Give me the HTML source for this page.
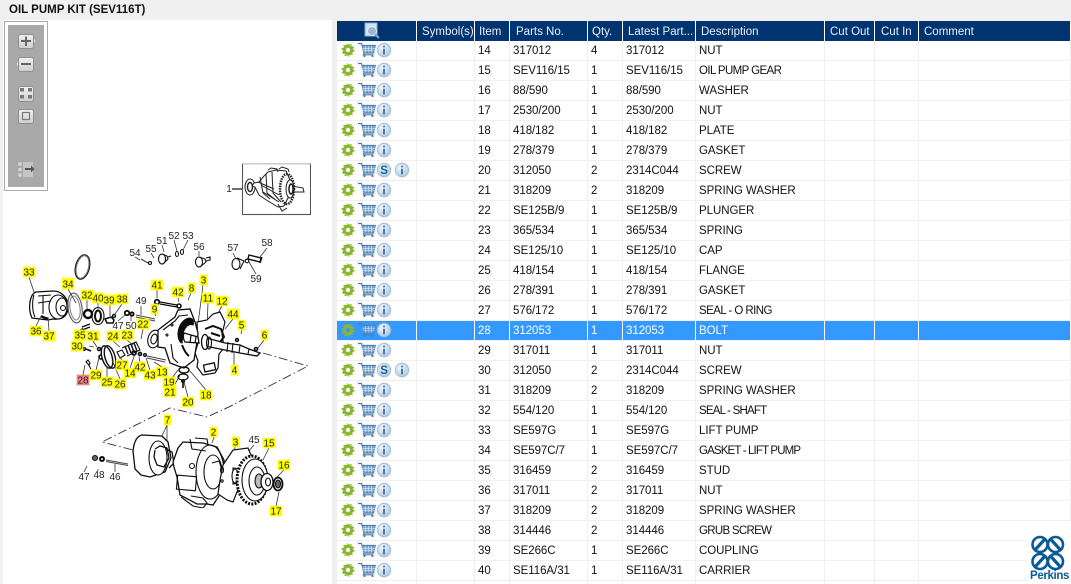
<!DOCTYPE html>
<html><head><meta charset="utf-8"><style>
html,body{margin:0;padding:0;width:1071px;height:584px;overflow:hidden;background:#f0f0f0;font-family:"Liberation Sans",sans-serif}
#title{position:absolute;left:9px;top:3px;font-size:11.5px;font-weight:bold;color:#111;line-height:14px;white-space:nowrap}
#left{position:absolute;left:3px;top:20px;width:329px;height:564px;background:#fff}
#tbo{position:absolute;left:4px;top:21px;width:42px;height:168px;border:1px solid #aaa;background:#fff}
#tbi{position:absolute;left:8px;top:25px;width:36px;height:162px;background:#a9a9a9}
#right{position:absolute;left:337px;top:21px;width:734px;height:563px;background:#fff;overflow:hidden}
table{border-collapse:separate;border-spacing:0;table-layout:fixed;width:734px;font-size:11.5px;color:#111}
th{background:#003470;color:#e8f0f8;font-weight:normal;height:20px;padding:2px 0 0 5px;text-align:left;border-right:1px solid #fff;white-space:nowrap;overflow:hidden;font-size:11.5px;box-sizing:border-box}
td{height:20px;padding:0 0 0 3px;border-right:1px solid #f0f0f0;border-bottom:1px solid #f0f0f0;box-sizing:border-box;white-space:nowrap;overflow:hidden;letter-spacing:-.05px}
tr.s td{background:#3399ff;color:#fff;border-bottom:1px solid #f0f0f0;border-right:1px solid #fff}
td.ic{padding:0;position:relative}
td.ic svg{position:absolute;left:0;top:0}
#logo{position:absolute;left:1028px;top:522px;width:43px;height:62px;background:#fff}
#per{position:absolute;left:1030px;top:570px;font-size:11.5px;font-weight:bold;color:#0a5a96;letter-spacing:-.35px;line-height:13px}
svg text{font-family:"Liberation Sans",sans-serif;font-size:10px;fill:#222;text-anchor:middle}
</style></head><body>
<svg width="0" height="0" style="position:absolute"><defs>
<radialGradient id="ig" cx=".4" cy=".35" r=".7"><stop offset="0" stop-color="#f2f7fb"/><stop offset="1" stop-color="#a9c6e0"/></radialGradient>
<filter id="bl" x="0" y="0" width="100%" height="100%"><feGaussianBlur stdDeviation=".35"/></filter>
<g id="gear"><circle cx="11" cy="9" r="3.700" fill="none" stroke="#8ab52e" stroke-width="3"/><circle cx="11" cy="9" r="5" fill="none" stroke="#8ab52e" stroke-width="1.600" stroke-dasharray="1.800 2.100"/><circle cx="11" cy="9" r="6" fill="none" stroke="#8ab52e" stroke-width="1" stroke-dasharray="1.800 2"/></g>
<g id="cart"><path d="M21 2.500h3.500l2.500 9.500h9.500l1.700-7.500H25" fill="none" stroke="#4b7cab" stroke-width="1.200"/><path d="M25 5h13l-1.600 6.500H27z" fill="#7ba3c9"/><path d="M28.500 5v6.500M31.500 5v6.500M34.500 5v6.500M25.500 7.300h12.500M26 9.500h11.500" stroke="#e4edf5" stroke-width=".6"/><path d="M27 12l-.7 1.800h10" fill="none" stroke="#4b7cab" stroke-width="1.100"/><circle cx="27.500" cy="15" r="1.100" fill="#4b7cab"/><circle cx="35.500" cy="15" r="1.100" fill="#4b7cab"/></g>
<g id="info"><circle cx="47" cy="9" r="6.800" fill="url(#ig)" stroke="#9dbbd6" stroke-width=".8"/><path d="M47 4.800v1.600M47 7.800v5.400" stroke="#3f73a6" stroke-width="1.900"/></g>
<g id="sym"><circle cx="47" cy="9" r="6.800" fill="url(#ig)" stroke="#9dbbd6" stroke-width=".8"/><text x="47" y="13" style="font-size:11.500px;font-weight:bold;fill:#0c5d94">S</text></g>
<g id="info2"><circle cx="65" cy="9" r="6.800" fill="url(#ig)" stroke="#9dbbd6" stroke-width=".8"/><path d="M65 4.800v1.600M65 7.800v5.400" stroke="#3f73a6" stroke-width="1.900"/></g>
</defs></svg>

<div id="title">OIL PUMP KIT (SEV116T)</div>
<div id="left"></div>
<div id="tbo"></div>
<div id="tbi"></div>
<svg style="position:absolute;left:0;top:0" width="60" height="200">
<defs><linearGradient id="bg" x1="0" y1="0" x2="0" y2="1"><stop offset="0" stop-color="#f0f0f0"/><stop offset="1" stop-color="#cfcfcf"/></linearGradient></defs>
<g stroke="#8f8f8f" fill="url(#bg)"><rect x="18.500" y="34.500" width="15" height="14" rx="2"/><rect x="18.500" y="57.500" width="15" height="14" rx="2"/><rect x="18.500" y="86.500" width="15" height="15" rx="2"/><rect x="18.500" y="109.500" width="15" height="14" rx="2"/></g>
<path d="M34 39l1.500 2-1.500 2zM18 62l-1.500 2 1.500 2z" fill="#ddd"/>
<path d="M21 41h10M26 36.500v9.500M21 64h10" stroke="#666" stroke-width="2"/>
<g fill="#777"><rect x="20" y="88" width="4" height="3.500"/><rect x="28" y="88" width="4" height="3.500"/><rect x="20" y="95" width="4" height="3.500"/><rect x="28" y="95" width="4" height="3.500"/></g>
<rect x="22.500" y="112.500" width="7" height="7" fill="none" stroke="#777" stroke-width="1.200"/>
<g fill="#d6d6d6" stroke="#a0a0a0" stroke-width=".6"><rect x="18" y="162" width="4" height="4"/><rect x="18" y="167.500" width="4" height="4"/><rect x="18" y="173" width="4" height="4"/></g>
<rect x="23" y="162" width="10" height="15" fill="#c4c4c4"/>
<path d="M25 169h8" stroke="#555" stroke-width="2"/><path d="M31 165.500l3.500 3.500-3.500 3.500z" fill="#555"/>
</svg>

<!-- Parts drawing -->
<svg style="position:absolute;left:0;top:0" width="335" height="584" viewBox="0 0 335 584">
<g filter="url(#bl)">
<g fill="none" stroke="#111" stroke-width="1.100">
<!-- thumbnail -->
<rect x="242.500" y="163.500" width="68" height="51" stroke="#555"/><path d="M242 163.500h69" stroke="#999" stroke-width="1.400"/>
<path d="M232 189h10" stroke-width="1.200"/>
<g stroke="#222" stroke-width="1">
<ellipse cx="250" cy="187" rx="5" ry="8"/><ellipse cx="250" cy="187" rx="2.500" ry="4.500" stroke-width="1.400"/>
<path d="M254 183l5-1 5-6 4-4 8-2 10 1 4 9-1 16-5 10-6 1-10-6-9-6-4-8-3-1z" fill="#fff"/>
<path d="M260 177l3 16 7 6M266 174l1 19 10 8M272 172l1 21 8 9M261 185l18 10M263 192l16 10M258 182l16 7M268 170l3-2 6 1 1 3M279 169l3-2 6 2 1 3" />
<ellipse cx="287" cy="189" rx="7" ry="15" stroke-width="2.500" stroke-dasharray="1.500 1"/><ellipse cx="290" cy="189" rx="4" ry="9" fill="#fff"/><ellipse cx="291" cy="189" rx="2" ry="5" stroke-width="1.500"/>
<path d="M292 186l11 2 1 4-12 0M278 204l4 7 5-3" />
</g>
<!-- pump 33 -->
<path d="M30 302c1-6 3-9 6-10l17-1c8 0 15 6 15 16s-7 13-15 12l-5 1-16-2c-2-4-3-10-2-16z" fill="#fff" stroke-width="1.300"/>
<path d="M38 296l13-1M38 303l13-2M34 295c-2 6-2 16 1 22M43 296v18"/><ellipse cx="58" cy="307" rx="9" ry="12"/><ellipse cx="62" cy="307" rx="6" ry="9"/><circle cx="63" cy="308" r="2.500"/><path d="M41 316c3 2 5 2 7 3" stroke-width="2.500"/>
<ellipse cx="75" cy="308" rx="7" ry="15" transform="rotate(-8 75 308)" stroke="#555"/><ellipse cx="75" cy="308" rx="5" ry="12" transform="rotate(-8 75 308)" stroke="#888"/>
<ellipse cx="82.500" cy="267" rx="7" ry="12.500" transform="rotate(14 82.500 267)"/><ellipse cx="82.500" cy="267" rx="6" ry="11.500" transform="rotate(14 82.500 267)" stroke="#777"/>
<circle cx="88" cy="314" r="4" stroke-width="2.400"/><ellipse cx="98" cy="316" rx="6" ry="8.500"/><ellipse cx="98" cy="316" rx="3" ry="5.500" stroke-width="2"/>
<path d="M105 319l6-2 3 3-1 3h-6z" stroke-width="1.500"/><circle cx="114" cy="316" r="1.500" stroke-width="1.400"/>
<path d="M82 327l8-3M82 330l8-3" stroke-width="1.400"/>
<circle cx="127" cy="313" r="2.200" stroke-width="1.800"/><circle cx="132" cy="314" r="1.700" stroke-width="1.800"/><path d="M136 315l19 4M136 317l19 4" stroke="#444"/>
<!-- 28-31 bolts and plate 25 -->
<path d="M86 349l5 2" stroke-width="1.500"/><circle cx="84" cy="349" r="1.400" stroke-width="1.400"/><circle cx="99" cy="349" r="1.500" stroke-width="1.500"/>
<path d="M86 362l2-2 2 3-1 2z"/><path d="M88 364l3 5"/><circle cx="101" cy="357" r="2" stroke-width="1.600"/>
<ellipse cx="107" cy="357" rx="5" ry="11.500" transform="rotate(-16 107 357)" fill="#fff" stroke-width="1.400"/><ellipse cx="110" cy="357" rx="5" ry="11.500" transform="rotate(-16 110 357)" stroke-width="1.400"/>
<path d="M117 352l5-2 3 5-5 3zM122 348l14-6 4 8-13 6" fill="#fff"/><path d="M125 346l3 8M128 345l3 8M131 344l3 8M134 343l3 8" stroke-width="1.400"/>
<circle cx="134" cy="353" r="2" stroke-width="1.700"/><circle cx="140" cy="354" r="1.500" stroke-width="1.700"/><circle cx="145" cy="355" r="1.300" stroke-width="1.400"/><path d="M147 356l19 4M147 358l18 4" stroke="#444"/>
<ellipse cx="154" cy="339" rx="6" ry="9" transform="rotate(15 154 339)" fill="#fff"/><ellipse cx="154" cy="339" rx="3" ry="5" transform="rotate(15 154 339)"/>
<!-- bolts at top -->
<path d="M141 259l7 4" stroke-width="1"/><circle cx="150" cy="263" r="1.500"/>
<ellipse cx="162" cy="259" rx="3.500" ry="5" fill="#fff"/><path d="M162 254l5 2 1 3-5 5M168 257l3-1"/><ellipse cx="177" cy="254" rx="1.500" ry="2.500"/><ellipse cx="182" cy="252" rx="1.500" ry="2.500"/>
<ellipse cx="199" cy="262" rx="3.500" ry="5" fill="#fff"/><path d="M199 257l6 2 1 3-6 5M206 258l4-1 0 3-4 1"/>
<ellipse cx="236" cy="264" rx="4" ry="5.500" fill="#fff"/><path d="M237 258l7 3-4 8M245 260l3-1"/><circle cx="247" cy="261" r="1.800"/>
<path d="M249 255l12 3-1 4-12-3zM249 255l-1 4M262 257l-2 6" stroke-width="1.400"/>
<!-- leaders -->
<path d="M29 277l5 15M36 326l5-10M49 331l-1-14M68 289l8 14M87 300v10M98 303v6M110 305v11M122 304l-7 10M113 341l7 6M127 340l6 5M143 329l-2 10M157 290v8M154 313l2 3M178 298l1 4M191 293l-3 7M203 285l-6 47M208 303l-1 24M222 306l-5 9M233 319l-8 10M242 330l-1 4M264 340l-6 8M234 365v-20M162 367l-8-5M150 370l-4-12M140 362l-1-5M130 368l5-14M122 360l-3-4M120 379l-8-19M107 377l0-11M96 370l3-12M89 346l5 1M93 341l4 6M83 375l2-10M81 348l3 1M80 330l3-2M118 321l7-6M131 321v-5M141 306v9M135 257l5 3M151 253l3 5M162 245l2 7M174 240l3 11M188 240l-5 10M199 251l0 5M233 253l3 6M267 248l-7 9M256 274l-7-12M172 378l6-8M173 388l7-13M188 397l-4-15M206 390l-16-19M167 425l-5 11M167 425v17M214 437l-2 6M235 447l-2 20M254 445l-5 6M269 448l-6 12M284 470l-8 8M276 506l3-14M84 472l3-6M99 470l-2 0M115 472l0-8" stroke="#333" stroke-width=".8"/>
<!-- main housing -->
<circle cx="157" cy="302" r="2.300" stroke-width="1.800"/><path d="M160 302l17 3M160 304l17 3" stroke-width="1.200"/>
<circle cx="179" cy="306" r="2" stroke-width="1.600"/>
<!-- rear flange 12 -->
<path d="M197 322l10-2 6-6 7-2 5 10-3 12 2 14-5 6-1 14-3 5-12 2-6-8 1-6-3-8 3-10z" fill="#fff" stroke-width="1.200"/>
<rect x="204" y="364" width="11" height="7" transform="rotate(-12 209 367)" stroke-width="1.300"/>
<!-- housing -->
<path d="M158 330l4-3 13-10 3-7 12-1 5 13 3 11-1 9-3 18-10 8-6-2-8-3-5-15-7-1z" fill="#fff" stroke-width="1.300"/>
<path d="M163 330l12-9 4-5 9-1M171 344l2 14 5 5" />
<circle cx="167" cy="335" r="1"/><circle cx="172" cy="325" r="1"/>
<path d="M178 333c1-9 6-14 11-15 4 0 5 3 4 7-4-2-8 2-10 8l-1 10c-3-1-4-5-4-10z" fill="#111"/>
<path d="M184 333l14 4 1 6-14-1c-2-3-2-6-1-9z" fill="#fff" stroke-width="1.300"/>
<path d="M191 335l-1 8M196 337l-1 6" stroke-width="1.200"/>
<path d="M182 345c2 5 4 9 7 11" stroke-width="2"/>
<!-- shaft -->
<path d="M203 337l22 6 15 2 9 4 11 4-3 3-17-3-15-3-20-4z" fill="#fff" stroke-width="1.300"/>
<ellipse cx="205" cy="342" rx="3.500" ry="7.500" fill="#fff" stroke-width="1.300"/>
<ellipse cx="209" cy="343" rx="2.500" ry="6"/>
<path d="M228 342l-1 10M233 343l-1 10M240 345l-1 8M249 349l-1 5" />
<path d="M205 329l8-3 8 3 3 8-4 5M211 333l9 3" stroke-width="2"/>
<circle cx="237" cy="340" r="1.400" stroke-width="1.600"/><circle cx="256" cy="349" r="1.500" stroke-width="1.600"/>
<ellipse cx="184" cy="370" rx="5" ry="3" stroke-width="1.400"/><ellipse cx="183" cy="377" rx="5" ry="3" stroke-width="1.200"/><path d="M183 380v8" stroke-width="1.600"/><circle cx="183" cy="381" r="1.500"/>
</g>
<!-- dashed -->
<g fill="none" stroke="#333" stroke-width=".9" stroke-dasharray="9 3 1.500 3">
<path d="M263 353l45 13-85 44"/><path d="M233 405l-26 12-37-9-68 34 31 8"/>
</g>
<!-- lower assembly -->
<g fill="none" stroke="#111" stroke-width="1.100">
<circle cx="95" cy="458" r="2.500" fill="#666"/><circle cx="102" cy="459" r="2" stroke-width="2"/><path d="M106 460l22 4M106 461.500l22 4" stroke="#444"/>
<path d="M142 435l20 1 6 6 3 16-6 14-15 5-9-2-6-6-2-18c1-9 4-15 9-16z" fill="#fff" stroke-width="1.300"/>
<ellipse cx="158" cy="458" rx="9" ry="17" fill="#fff"/>
<path d="M155 449l5-3 7 2 2 10-5 9-7-2-3-8 1-7M166 449l6 3 2 11-5 5" stroke-width="1.300"/>
<path d="M173 462l5-14 5-6 20 1 14 4 7 13 0 24-5 12-6 9-6-1-10 0-17-9-3-18-3-10z" fill="#fff" stroke-width="1.300"/>
<ellipse cx="210" cy="472" rx="14" ry="27"/><ellipse cx="213" cy="472" rx="9" ry="17"/><circle cx="192" cy="466" r="2.500"/>
<path d="M190 439l2 10 14 2M195 438l12 1 1 6"/><rect x="177" y="476" width="19" height="14" transform="rotate(5 187 483)"/>
<path d="M181 497l12 9 10 2 4-5-4-5-12-2"/><path d="M212 463l7-2 4 12-3 7"/>
<path d="M223 465l10-15 15-2 5 12-10 10-4 17-6 15-6-2-9-6 2-14z" fill="#fff" stroke-width="1.200"/><ellipse cx="222" cy="470" rx="1.500" ry="3"/><circle cx="222" cy="481" r="1.200"/>
<path d="M233 468l10 1 3 13-13 2z" fill="#fff"/><ellipse cx="235" cy="476" rx="3" ry="7" fill="#fff"/>
<ellipse cx="252" cy="480" rx="15" ry="24" fill="#fff" stroke-width="3" stroke-dasharray="2 1.300"/>
<ellipse cx="255" cy="480" rx="13" ry="21" fill="#fff"/><ellipse cx="257" cy="481" rx="8" ry="14"/><ellipse cx="259" cy="481" rx="4" ry="7" fill="#bbb"/>
<ellipse cx="267" cy="482" rx="6" ry="8.500" fill="#fff" stroke-width="1.300"/><ellipse cx="268" cy="482" rx="2.500" ry="4"/>
<ellipse cx="278" cy="484" rx="4.500" ry="6.500" fill="#fff" stroke-width="1.800"/><ellipse cx="278" cy="484" rx="2.500" ry="4" fill="#666"/>
</g>
</g>
<!-- grey labels -->
<g>
<text x="229" y="192">1</text><text x="118" y="329">47</text><text x="131" y="329">50</text><text x="141" y="304">49</text><text x="135" y="256">54</text><text x="151" y="252">55</text><text x="162" y="244">51</text><text x="174" y="239">52</text><text x="188" y="239">53</text><text x="199" y="250">56</text><text x="233" y="251">57</text><text x="267" y="246">58</text><text x="256" y="282">59</text><text x="254" y="443">45</text><text x="84" y="480">47</text><text x="99" y="478">48</text><text x="115" y="480">46</text>
</g>
<!-- yellow labels -->
<g fill="#ffff00" stroke="#ffff00" stroke-width=".6">
<rect x="23" y="267" width="12" height="10"/><rect x="62" y="278" width="12" height="11"/><rect x="81" y="290" width="12" height="10"/><rect x="92" y="293" width="12" height="10"/><rect x="103" y="295" width="12" height="10"/><rect x="116" y="294" width="12" height="10"/><rect x="30" y="326" width="12" height="10"/><rect x="43" y="331" width="12" height="10"/><rect x="74" y="330" width="12" height="10"/><rect x="87" y="331" width="12" height="10"/><rect x="71" y="341" width="12" height="10"/><rect x="107" y="331" width="12" height="10"/><rect x="121" y="330" width="12" height="10"/><rect x="137" y="319" width="12" height="10"/><rect x="151" y="280" width="12" height="10"/><rect x="151" y="304" width="7" height="10"/><rect x="172" y="287" width="12" height="10"/><rect x="188" y="283" width="7" height="10"/><rect x="200" y="275" width="7" height="10"/><rect x="202" y="293" width="12" height="10"/><rect x="216" y="296" width="12" height="10"/><rect x="227" y="309" width="12" height="10"/><rect x="238" y="320" width="7" height="10"/><rect x="261" y="330" width="7" height="10"/><rect x="116" y="360" width="12" height="10"/><rect x="124" y="368" width="12" height="10"/><rect x="134" y="362" width="12" height="10"/><rect x="144" y="370" width="12" height="10"/><rect x="156" y="367" width="12" height="10"/><rect x="90" y="370" width="12" height="10"/><rect x="101" y="377" width="12" height="10"/><rect x="114" y="379" width="12" height="10"/><rect x="163" y="377" width="12" height="10"/><rect x="164" y="387" width="12" height="10"/><rect x="182" y="397" width="12" height="10"/><rect x="200" y="390" width="12" height="10"/><rect x="231" y="365" width="7" height="10"/><rect x="164" y="415" width="7" height="10"/><rect x="210" y="427" width="7" height="10"/><rect x="232" y="437" width="7" height="10"/><rect x="263" y="438" width="12" height="10"/><rect x="278" y="460" width="12" height="10"/><rect x="270" y="506" width="12" height="10"/>
</g>
<rect x="77" y="375" width="12" height="10" fill="#f08080" stroke="#f08080" stroke-width=".6"/>
<g>
<text x="29" y="275.500">33</text><text x="68" y="287.500">34</text><text x="87" y="298.500">32</text><text x="98" y="301.500">40</text><text x="109" y="303.500">39</text><text x="122" y="302.500">38</text><text x="36" y="334.500">36</text><text x="49" y="339.500">37</text><text x="80" y="338.500">35</text><text x="93" y="339.500">31</text><text x="77" y="349.500">30</text><text x="113" y="339.500">24</text><text x="127" y="338.500">23</text><text x="143" y="327.500">22</text><text x="157" y="288.500">41</text><text x="154.500" y="312.500">9</text><text x="178" y="295.500">42</text><text x="191.500" y="291.500">8</text><text x="203.500" y="283.500">3</text><text x="208" y="301.500">11</text><text x="222" y="304.500">12</text><text x="233" y="317.500">44</text><text x="241.500" y="328.500">5</text><text x="264.500" y="338.500">6</text><text x="122" y="368.500">27</text><text x="130" y="376.500">14</text><text x="140" y="370.500">42</text><text x="150" y="378.500">43</text><text x="162" y="375.500">13</text><text x="96" y="378.500">29</text><text x="107" y="385.500">25</text><text x="120" y="387.500">26</text><text x="83" y="383.500">28</text><text x="169" y="385.500">19</text><text x="170" y="395.500">21</text><text x="188" y="405.500">20</text><text x="206" y="398.500">18</text><text x="234.500" y="373.500">4</text><text x="167.500" y="423.500">7</text><text x="213.500" y="435.500">2</text><text x="235.500" y="445.500">3</text><text x="269" y="446.500">15</text><text x="284" y="468.500">16</text><text x="276" y="514.500">17</text>
</g>
</svg>

<div id="right">
<table>
<colgroup><col style="width:80px"><col style="width:58px"><col style="width:35px"><col style="width:78px"><col style="width:35px"><col style="width:73px"><col style="width:129px"><col style="width:50px"><col style="width:44px"><col></colgroup>
<tr>
<th style="padding:0;position:relative"><svg width="78" height="20" style="position:absolute;left:0;top:0"><rect x="28" y="2" width="12" height="13" fill="#cfe2f3" stroke="#7fb0d8"/><circle cx="35" cy="10" r="4.500" fill="#9db8cf" stroke="#e8f0f8"/><path d="M38 13l4 4" stroke="#7fa8cc" stroke-width="2"/></svg></th>
<th>Symbol(s)</th><th style="padding-left:4px">Item</th><th style="padding-left:6px">Parts No.</th><th style="padding-left:4px">Qty.</th><th>Latest Part...</th><th>Description</th><th>Cut Out</th><th style="padding-left:6px">Cut In</th><th>Comment</th></tr>
<tr><td class="ic"><svg width="78" height="20"><use href="#gear"/><use href="#cart"/><use href="#info"/></svg></td><td></td><td>14</td><td>317012</td><td>4</td><td>317012</td><td>NUT</td><td></td><td></td><td></td></tr>
<tr><td class="ic"><svg width="78" height="20"><use href="#gear"/><use href="#cart"/><use href="#info"/></svg></td><td></td><td>15</td><td>SEV116/15</td><td>1</td><td>SEV116/15</td><td style="letter-spacing:-.6px">OIL PUMP GEAR</td><td></td><td></td><td></td></tr>
<tr><td class="ic"><svg width="78" height="20"><use href="#gear"/><use href="#cart"/><use href="#info"/></svg></td><td></td><td>16</td><td>88/590</td><td>1</td><td>88/590</td><td>WASHER</td><td></td><td></td><td></td></tr>
<tr><td class="ic"><svg width="78" height="20"><use href="#gear"/><use href="#cart"/><use href="#info"/></svg></td><td></td><td>17</td><td>2530/200</td><td>1</td><td>2530/200</td><td>NUT</td><td></td><td></td><td></td></tr>
<tr><td class="ic"><svg width="78" height="20"><use href="#gear"/><use href="#cart"/><use href="#info"/></svg></td><td></td><td>18</td><td>418/182</td><td>1</td><td>418/182</td><td>PLATE</td><td></td><td></td><td></td></tr>
<tr><td class="ic"><svg width="78" height="20"><use href="#gear"/><use href="#cart"/><use href="#info"/></svg></td><td></td><td>19</td><td>278/379</td><td>1</td><td>278/379</td><td>GASKET</td><td></td><td></td><td></td></tr>
<tr><td class="ic"><svg width="78" height="20"><use href="#gear"/><use href="#cart"/><use href="#sym"/><use href="#info2"/></svg></td><td></td><td>20</td><td>312050</td><td>2</td><td>2314C044</td><td>SCREW</td><td></td><td></td><td></td></tr>
<tr><td class="ic"><svg width="78" height="20"><use href="#gear"/><use href="#cart"/><use href="#info"/></svg></td><td></td><td>21</td><td>318209</td><td>2</td><td>318209</td><td>SPRING WASHER</td><td></td><td></td><td></td></tr>
<tr><td class="ic"><svg width="78" height="20"><use href="#gear"/><use href="#cart"/><use href="#info"/></svg></td><td></td><td>22</td><td>SE125B/9</td><td>1</td><td>SE125B/9</td><td>PLUNGER</td><td></td><td></td><td></td></tr>
<tr><td class="ic"><svg width="78" height="20"><use href="#gear"/><use href="#cart"/><use href="#info"/></svg></td><td></td><td>23</td><td>365/534</td><td>1</td><td>365/534</td><td>SPRING</td><td></td><td></td><td></td></tr>
<tr><td class="ic"><svg width="78" height="20"><use href="#gear"/><use href="#cart"/><use href="#info"/></svg></td><td></td><td>24</td><td>SE125/10</td><td>1</td><td>SE125/10</td><td>CAP</td><td></td><td></td><td></td></tr>
<tr><td class="ic"><svg width="78" height="20"><use href="#gear"/><use href="#cart"/><use href="#info"/></svg></td><td></td><td>25</td><td>418/154</td><td>1</td><td>418/154</td><td>FLANGE</td><td></td><td></td><td></td></tr>
<tr><td class="ic"><svg width="78" height="20"><use href="#gear"/><use href="#cart"/><use href="#info"/></svg></td><td></td><td>26</td><td>278/391</td><td>1</td><td>278/391</td><td>GASKET</td><td></td><td></td><td></td></tr>
<tr><td class="ic"><svg width="78" height="20"><use href="#gear"/><use href="#cart"/><use href="#info"/></svg></td><td></td><td>27</td><td>576/172</td><td>1</td><td>576/172</td><td style="letter-spacing:-.55px">SEAL - O RING</td><td></td><td></td><td></td></tr>
<tr class="s"><td class="ic"><svg width="78" height="20"><use href="#gear"/><use href="#cart" opacity=".75"/><use href="#info"/></svg></td><td></td><td>28</td><td>312053</td><td>1</td><td>312053</td><td>BOLT</td><td></td><td></td><td></td></tr>
<tr><td class="ic"><svg width="78" height="20"><use href="#gear"/><use href="#cart"/><use href="#info"/></svg></td><td></td><td>29</td><td>317011</td><td>1</td><td>317011</td><td>NUT</td><td></td><td></td><td></td></tr>
<tr><td class="ic"><svg width="78" height="20"><use href="#gear"/><use href="#cart"/><use href="#sym"/><use href="#info2"/></svg></td><td></td><td>30</td><td>312050</td><td>2</td><td>2314C044</td><td>SCREW</td><td></td><td></td><td></td></tr>
<tr><td class="ic"><svg width="78" height="20"><use href="#gear"/><use href="#cart"/><use href="#info"/></svg></td><td></td><td>31</td><td>318209</td><td>2</td><td>318209</td><td>SPRING WASHER</td><td></td><td></td><td></td></tr>
<tr><td class="ic"><svg width="78" height="20"><use href="#gear"/><use href="#cart"/><use href="#info"/></svg></td><td></td><td>32</td><td>554/120</td><td>1</td><td>554/120</td><td style="letter-spacing:-.8px">SEAL - SHAFT</td><td></td><td></td><td></td></tr>
<tr><td class="ic"><svg width="78" height="20"><use href="#gear"/><use href="#cart"/><use href="#info"/></svg></td><td></td><td>33</td><td>SE597G</td><td>1</td><td>SE597G</td><td>LIFT PUMP</td><td></td><td></td><td></td></tr>
<tr><td class="ic"><svg width="78" height="20"><use href="#gear"/><use href="#cart"/><use href="#info"/></svg></td><td></td><td>34</td><td>SE597C/7</td><td>1</td><td>SE597C/7</td><td style="letter-spacing:-.85px">GASKET - LIFT PUMP</td><td></td><td></td><td></td></tr>
<tr><td class="ic"><svg width="78" height="20"><use href="#gear"/><use href="#cart"/><use href="#info"/></svg></td><td></td><td>35</td><td>316459</td><td>2</td><td>316459</td><td>STUD</td><td></td><td></td><td></td></tr>
<tr><td class="ic"><svg width="78" height="20"><use href="#gear"/><use href="#cart"/><use href="#info"/></svg></td><td></td><td>36</td><td>317011</td><td>2</td><td>317011</td><td>NUT</td><td></td><td></td><td></td></tr>
<tr><td class="ic"><svg width="78" height="20"><use href="#gear"/><use href="#cart"/><use href="#info"/></svg></td><td></td><td>37</td><td>318209</td><td>2</td><td>318209</td><td>SPRING WASHER</td><td></td><td></td><td></td></tr>
<tr><td class="ic"><svg width="78" height="20"><use href="#gear"/><use href="#cart"/><use href="#info"/></svg></td><td></td><td>38</td><td>314446</td><td>2</td><td>314446</td><td style="letter-spacing:-.7px">GRUB SCREW</td><td></td><td></td><td></td></tr>
<tr><td class="ic"><svg width="78" height="20"><use href="#gear"/><use href="#cart"/><use href="#info"/></svg></td><td></td><td>39</td><td>SE266C</td><td>1</td><td>SE266C</td><td>COUPLING</td><td></td><td></td><td></td></tr>
<tr><td class="ic"><svg width="78" height="20"><use href="#gear"/><use href="#cart"/><use href="#info"/></svg></td><td></td><td>40</td><td>SE116A/31</td><td>1</td><td>SE116A/31</td><td>CARRIER</td><td></td><td></td><td></td></tr>
<tr><td></td><td></td><td></td><td></td><td></td><td></td><td></td><td></td><td></td><td></td></tr>
</table>
</div>

<div id="logo"></div>
<svg style="position:absolute;left:1028px;top:530px" width="43" height="42" viewBox="0 0 43 42">
<g fill="none" stroke="#0a5a96" stroke-width="2.600">
<circle cx="12" cy="14.500" r="7.500"/><circle cx="27.500" cy="14.500" r="7.500"/><circle cx="12" cy="31.500" r="7.500"/><circle cx="27.500" cy="31.500" r="7.500"/>
<path d="M7 20L17 9M22.500 9L32.500 20M7 37L17 26M22.500 26L32.500 37" stroke-width="3.200"/>
</g></svg>
<div id="per">Perkins</div>
</body></html>
